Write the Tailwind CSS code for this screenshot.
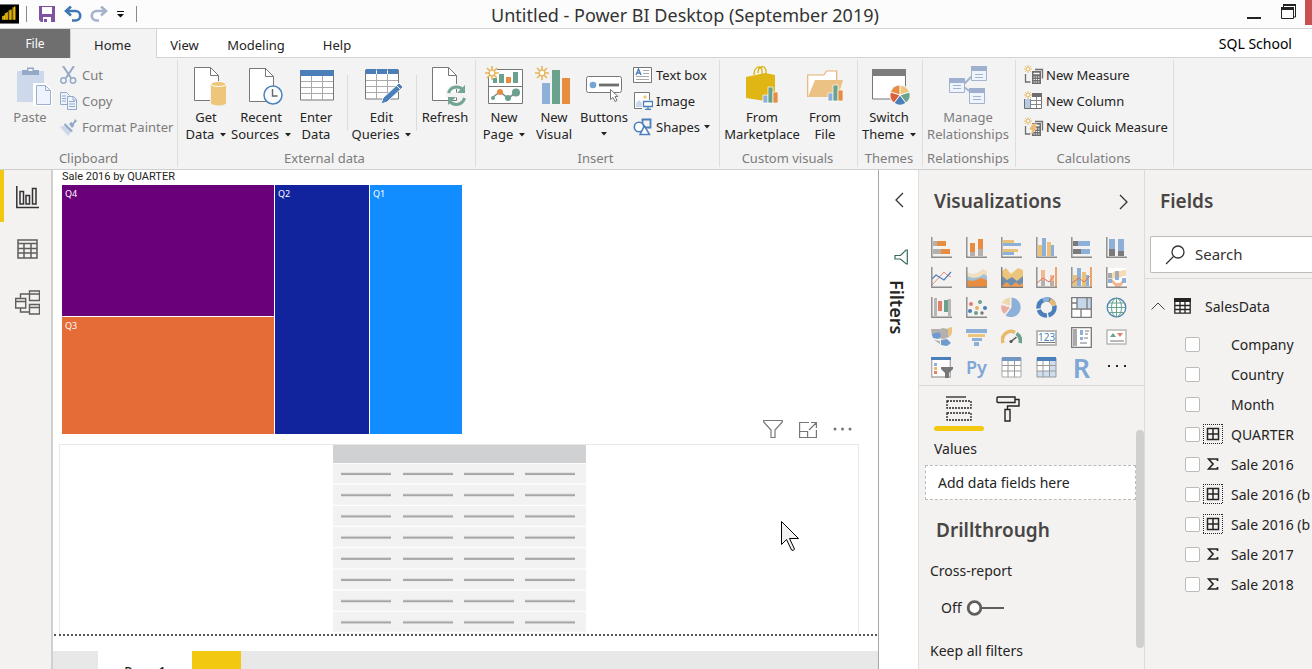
<!DOCTYPE html>
<html lang="en">
<head>
<meta charset="utf-8">
<title>Untitled - Power BI Desktop</title>
<script src="https://cdn.jsdelivr.net/npm/@tailwindcss/browser@4"></script>
</head>
<body class="flex h-screen flex-col overflow-hidden bg-white font-['Noto_Sans','Open_Sans',sans-serif] text-[#252423]">

<svg class="hidden" aria-hidden="true">
  <defs>
    <symbol id="caret" viewBox="0 0 6 4"><path d="M0 0h6L3 3.5z" fill="#222"/></symbol>
    <symbol id="page" viewBox="0 0 25 34"><path d="M.5.5h16l8 8v25H.5z" fill="#fff" stroke="#777"/><path d="M16.500.5v8h8" fill="none" stroke="#777"/></symbol>
    <symbol id="burst" viewBox="0 0 14 14"><path d="M7 0v4M7 10v4M0 7h4M10 7h4M2 2l3 3M9 9l3 3M12 2L9 5M5 9l-3 3" stroke="#e8b55c" stroke-width="1.600"/><circle cx="7" cy="7" r="2.800" fill="#fff" stroke="#e8b55c" stroke-width="1.300"/></symbol>
    <symbol id="axes" viewBox="0 0 21 21"><path d="M.8 0v20.200H21" fill="none" stroke="#8a8a8a" stroke-width="1.400"/></symbol>
    <symbol id="calcgroup" viewBox="0 0 20 20"><path d="M11 4.500h7.500v9M1.500 9v8h5" fill="none" stroke="#6e6e6e" stroke-width="1.300"/><rect x="8" y="6" width="9" height="13" fill="#6e6e6e"/><path d="M9.500 8.500h6" stroke="#fff" stroke-width="1.500"/><path d="M9.500 12h6M9.500 14.500h6M9.500 17h6" stroke="#fff" stroke-width="1.200" stroke-dasharray="1.300 1"/></symbol>
    <symbol id="calcfield" viewBox="0 0 20 20"><path d="M0 .5h20M0 19.500h20M.5 0v20M19.500 0v20" fill="none" stroke="#252423" stroke-dasharray="1 1"/><path d="M4.500 4.500h11v11h-11zM10 4.500v11M4.500 10h11" fill="none" stroke="#252423" stroke-width="1.500"/></symbol>
    <symbol id="sigma" viewBox="0 0 12 12"><path d="M10.500 3V1H1.500L6 6l-4.500 5h9V9" fill="none" stroke="#252423" stroke-width="1.700"/></symbol>
  </defs>
</svg>

<!-- Title bar -->
<header class="flex h-[29px] shrink-0 items-center border-b border-[#d4d4d4] bg-[#fcfcfc]">
  <div class="flex w-[137px] shrink-0 items-center">
    <svg class="h-5 w-5" viewBox="0 0 20 20"><path fill="#000" d="M0 0h20v20H0z"/><path d="M2 12h3v4H2zM5 9h3v7H5zM9 6h3v10H9zM13 3h3v13h-3z" fill="#c79a0c"/><path d="M4 11h1v5H4zM7 8h1v8H7zM11 5h1v11h-1zM15 2h1v14h-1z" fill="#f2c811"/></svg>
    <span class="ml-[7px] h-4 w-px bg-[#8a8a8a]"></span>
    <button class="ml-3" aria-label="Save"><svg class="h-4 w-4" viewBox="0 0 16 16"><path d="M0 0h16v16H2l-2-2z" fill="#8052a3"/><path d="M3 1h10v7H3z" fill="#fff"/><path d="M4 11h8v5H4z" fill="#fff"/><path d="M5 13h3v3H5z" fill="#8052a3"/></svg></button>
    <button class="ml-[9px]" aria-label="Undo"><svg class="h-4 w-[18px]" viewBox="0 0 18 16"><path d="M2 5h9.500a4.600 4.600 0 0 1 0 9.500H8" fill="none" stroke="#3f77b5" stroke-width="2.600"/><path d="M7 .5L2 5l5 4.500" fill="none" stroke="#3f77b5" stroke-width="2.600"/></svg></button>
    <button class="ml-2" aria-label="Redo"><svg class="h-4 w-[18px]" viewBox="0 0 18 16"><path d="M16 5H6.500a4.600 4.600 0 0 0 0 9.500H9" fill="none" stroke="#a4b3cb" stroke-width="2.600"/><path d="M11 .5L16 5l-5 4.500" fill="none" stroke="#a4b3cb" stroke-width="2.600"/></svg></button>
    <button class="ml-[9px]" aria-label="Customize toolbar"><svg class="h-[7px] w-[7px]" viewBox="0 0 7 7"><path d="M0 0h7v1H0zM0 3h7L3.500 6.500z" fill="#111"/></svg></button>
    <span class="ml-3 h-4 w-px bg-[#8a8a8a]"></span>
  </div>
  <h1 class="flex-1 pt-0.5 text-center text-[18px] leading-6 text-[#333]">Untitled - Power BI Desktop (September 2019)</h1>
  <div class="flex w-[79px] shrink-0 self-start pl-3.5">
    <button aria-label="Minimize"><svg class="h-6 w-3.5" viewBox="0 0 14 24"><path d="M0 16h14v2H0z" fill="#222"/></svg></button>
    <button class="ml-5" aria-label="Restore"><svg class="h-6 w-[15px]" viewBox="0 0 15 24"><path d="M2.500 6V4h12v12h-2" fill="none" stroke="#222"/><path d="M2 3h13v2H2zM0 6h13v3H0z" fill="#222"/><path d="M.5 6.500h12v11H.5z" fill="none" stroke="#222"/></svg></button>
    <button class="ml-[9px] h-[25px] w-[7px] bg-[#c75050]" aria-label="Close"></button>
  </div>
</header>

<!-- Ribbon tabs -->
<nav class="flex h-[29px] shrink-0 bg-white text-[13px]">
  <button class="w-[70px] bg-[#6f6f6f] text-xs text-white">File</button>
  <button class="w-[87px] border-x border-[#d4d4d4] bg-[#f3f3f3] pt-1 pr-0.5">Home</button>
  <div class="flex flex-1 items-center border-b border-[#d4d4d4] pt-1.5">
    <button class="w-[55px]">View</button>
    <button class="w-[88px]">Modeling</button>
    <button class="w-[74px]">Help</button>
    <button class="mr-5 ml-auto pb-1.5 text-[14px] text-black">SQL School</button>
  </div>
</nav>

<!-- Ribbon -->
<div class="flex h-28 shrink-0 border-b border-[#cfcfcf] bg-[#f3f3f3] pt-0.5 pb-0.5 text-[13px] leading-[17px]">
  <section class="flex w-[178px] shrink-0 flex-col border-r border-[#dedede] text-[#7c7c7c]">
    <div class="flex flex-1">
      <button class="flex w-[60px] flex-col items-center pt-1.5">
        <svg class="mb-[3px] ml-2 h-10 w-9" viewBox="0 0 36 40"><path d="M1 5h27v31H1z" fill="#cdd8ea"/><path d="M6 4h5V1.500h7V4h5v5H6z" fill="#94a8c8"/><path d="M12.500 3h4v2h-4z" fill="#f3f3f3"/><path d="M18.500 18.500h10l6 6v14h-16z" fill="#eef4fd" stroke="#fff" stroke-width="3"/><path d="M20.500 19.500h9l5 5v14h-14z" fill="#eef4fd" stroke="#9fb0ce"/><path d="M29.500 19.500v5h5" fill="none" stroke="#9fb0ce"/></svg>
        Paste</button>
      <div class="flex flex-col pt-0.5">
        <button class="flex h-[26px] items-center gap-[5px]"><svg class="h-[18px] w-[17px]" viewBox="0 0 17 18"><path d="M3 0l8 12M14 0L6 12" stroke="#94a8c8" stroke-width="2"/><circle cx="3.500" cy="14.500" r="2.700" fill="none" stroke="#94a8c8" stroke-width="1.500"/><circle cx="13" cy="14.500" r="2.700" fill="none" stroke="#94a8c8" stroke-width="1.500"/></svg>Cut</button>
        <button class="flex h-[26px] items-center gap-[5px]"><svg class="h-[18px] w-[17px]" viewBox="0 0 17 18"><path d="M.5.5h6l3 3v9h-9z" fill="#eef4fd" stroke="#94a8c8"/><path d="M2 4h4M2 6.500h4M2 9h4" stroke="#94a8c8"/><path d="M7.500 4.500h6l3 3v10h-9z" fill="#eef4fd" stroke="#94a8c8"/><path d="M9 9.500h6M9 12h6M9 14.500h6M13 5v3h3" fill="none" stroke="#94a8c8"/></svg>Copy</button>
        <button class="flex h-[26px] items-center gap-[5px]"><svg class="h-[17px] w-[17px]" viewBox="0 0 17 17"><path d="M0 8l6-2 6 6-4 5z" fill="#cdd8ea"/><path d="M5 4l8 8-2 1-7-7zM9 5l2-2 2 1 2-4 2 2-3 3v2l-2 2z" fill="#94a8c8"/></svg>Format Painter</button>
      </div>
    </div>
    <h2 class="text-center">Clipboard</h2>
  </section>

  <section class="flex w-[298px] shrink-0 flex-col border-r border-[#dedede]">
    <div class="flex flex-1 pl-px">
      <button class="flex w-[54px] flex-col items-center pt-1.5"><svg class="mb-[3px] ml-2.5 h-10 w-[34px]" viewBox="0 0 34 40"><use href="#page" width="25" height="34" y="1"/><path d="M16.500 17v21h16V17" fill="#edc67b" stroke="#f3f3f3"/><ellipse cx="24.500" cy="37" rx="7.500" ry="2.500" fill="#edc67b"/><ellipse cx="24.500" cy="18" rx="7.500" ry="2.500" fill="#edc67b" stroke="#fff"/></svg><span>Get</span><span class="flex items-center gap-1.5">Data<svg class="h-1 w-1.5"><use href="#caret"/></svg></span></button>
      <button class="flex w-14 flex-col items-center pt-1.5"><svg class="mb-[3px] ml-2.5 h-10 w-[34px]" viewBox="0 0 34 40"><use href="#page" width="25" height="34" y="2"/><circle cx="24" cy="29" r="9" fill="#f9fbff" stroke="#4c83bd" stroke-width="1.500"/><path d="M23.500 23v7h5" fill="none" stroke="#666" stroke-width="1.400"/></svg><span>Recent</span><span class="flex items-center gap-1.5">Sources<svg class="h-1 w-1.5"><use href="#caret"/></svg></span></button>
      <button class="flex w-[54px] flex-col items-center pt-1.5"><svg class="mb-[3px] ml-0.5 h-10 w-[34px]" viewBox="0 0 34 40"><path d="M.5 6h33v28H.5z" fill="#fff" stroke="#777"/><path d="M0 4h34v6H0z" fill="#4a7fba"/><path d="M1 15.500h32M1 21.500h32M1 27.500h32M11.500 10v24M22.500 10v24" stroke="#aaa"/></svg><span>Enter</span><span>Data</span></button>
      <span class="mr-[3px] ml-1 mt-[15px] h-14 w-px bg-[#dcdcdc]"></span>
      <button class="flex w-[61px] flex-col items-center pt-1.5"><svg class="mb-[3px] ml-1 h-10 w-[38px]" viewBox="0 0 38 40"><path d="M.5 4h33v29H.5z" fill="#fff" stroke="#777"/><path d="M1 3h10v5H1zM12 3h10v5H12zM23 3h10v5H23z" fill="#4a7fba"/><path d="M1 14.500h32M1 20.500h32M1 26.500h32M11.500 8v25M22.500 8v25" stroke="#aaa"/><path d="M16 38l2-6 16-15 4 4-16 15z" fill="#4a7fba" stroke="#f3f3f3"/><path d="M31 19l4 4" stroke="#fff"/></svg><span>Edit</span><span class="flex items-center gap-1.5">Queries<svg class="h-1 w-1.5"><use href="#caret"/></svg></span></button>
      <span class="mr-0.5 ml-1 mt-[15px] h-14 w-px bg-[#dcdcdc]"></span>
      <button class="flex w-[52px] flex-col items-center pt-1.5"><svg class="mb-[3px] ml-2 h-10 w-[34px]" viewBox="0 0 34 40"><use href="#page" width="25" height="34" y="1"/><path d="M14 29h20M16 27a8.500 8.500 0 0 1 15-3M32 32a8.500 8.500 0 0 1-15 3" fill="none" stroke="#f3f3f3" stroke-width="5"/><path d="M16.500 27a8.500 8.500 0 0 1 14.500-3M32.500 32a8.500 8.500 0 0 1-15 3" fill="none" stroke="#73a592" stroke-width="3"/><path d="M33 19v8h-8zM16 39v-8h8z" fill="#73a592"/></svg><span>Refresh</span></button>
    </div>
    <h2 class="pr-1 text-center text-[#7c7c7c]">External data</h2>
  </section>

  <section class="flex w-[244px] shrink-0 flex-col border-r border-[#dedede]">
    <div class="flex flex-1 pl-[3px]">
      <button class="flex w-[50px] flex-col items-center pt-1.5"><svg class="mb-[3px] h-10 w-[38px]" viewBox="0 0 38 40"><path d="M3.500 3.500h34v34h-34z" fill="#fff" stroke="#777"/><path d="M4 20.500h34" stroke="#777"/><path d="M8 12h4v5H8zM14 8h5v9h-5zM28 6h5v11h-5z" fill="#6aa28d"/><path d="M21 11h5v6h-5z" fill="#e88c42"/><path d="M8 31l7-5 8 6 8-5" fill="none" stroke="#888" stroke-width="1.500"/><circle cx="8" cy="32" r="2" fill="#6aa28d"/><circle cx="15" cy="26" r="3" fill="#e88c42"/><circle cx="23" cy="32" r="3" fill="#6aa28d"/><circle cx="31" cy="26.500" r="4" fill="#6aa28d"/><path d="M0 0h12v11H0z" fill="#f3f3f3"/><use href="#burst" width="14" height="14"/></svg><span>New</span><span class="flex items-center gap-1.5">Page<svg class="h-1 w-1.5"><use href="#caret"/></svg></span></button>
      <button class="flex w-[50px] flex-col items-center pt-1.5"><svg class="mr-0.5 mb-[3px] h-10 w-9" viewBox="0 0 36 40"><path d="M7 17h8v21H7z" fill="#8db0d8"/><path d="M17 4h8v34h-8z" fill="#6aa28d"/><path d="M27 12h8v26h-8z" fill="#e88c42"/><use href="#burst" width="14" height="14"/></svg><span>New</span><span>Visual</span></button>
      <button class="flex w-[50px] flex-col items-center pt-1.5"><svg class="mb-[3px] h-10 w-9" viewBox="0 0 36 40"><rect x=".5" y="10.500" width="35" height="16" rx="2" fill="#fff" stroke="#777"/><circle cx="7" cy="19" r="3.300" fill="#74a5d6"/><path d="M13 19h20" stroke="#6e6e6e" stroke-width="2.800"/><path d="M24.500 23.500v10l2.500-2 2 4 2-1-2-4h3z" fill="#fff" stroke="#777"/></svg><span>Buttons</span><svg class="mt-1.5 h-1 w-1.5"><use href="#caret"/></svg></button>
      <div class="ml-1 flex flex-col pt-0.5">
        <button class="flex h-[26px] items-center gap-[3px]"><svg class="h-[18px] w-5" viewBox="0 0 20 18"><path d="M.5 1.500h18v15H.5z" fill="#fff" stroke="#777"/><path d="M3 9l2.500-6L8 9M4 7h3" fill="none" stroke="#4a7fba" stroke-width="1.400"/><path d="M10 4.500h6M10 7.500h6M3 10.500h13M3 13.500h13" stroke="#aaa"/></svg>Text box</button>
        <button class="flex h-[26px] items-center gap-[3px]"><svg class="h-[18px] w-5" viewBox="0 0 20 18"><path d="M9 16.500H1.500V.5h15V8" fill="#fff" stroke="#777"/><path d="M3 15v-4l3-3 3 3v4z" fill="#cdd8ea"/><circle cx="12" cy="5" r="1.700" fill="#edc67b"/><path d="M10.500 9.500h9v5h-9zM15 15v3M12 17.500h6" fill="#fff" stroke="#4a7fba" stroke-width="1.300"/></svg>Image</button>
        <button class="flex h-[26px] items-center gap-[3px]"><svg class="h-[18px] w-5" viewBox="0 0 20 18"><path d="M9.500 1.500h8v8h-8z" fill="#f3f3f3" stroke="#4a7fba" stroke-width="1.800"/><circle cx="6" cy="9" r="4.700" fill="#fff" stroke="#4a7fba" stroke-width="1.600"/><path d="M7 16.500L11.500 8l5 8.500z" fill="#fff" stroke="#4a7fba" stroke-width="1.500"/></svg><span class="flex items-center gap-1">Shapes<svg class="h-1 w-1.5"><use href="#caret"/></svg></span></button>
      </div>
    </div>
    <h2 class="pr-1 text-center text-[#7c7c7c]">Insert</h2>
  </section>

  <section class="flex w-[138px] shrink-0 flex-col border-r border-[#dedede]">
    <div class="flex flex-1 pl-1">
      <button class="flex w-[76px] flex-col items-center pt-1.5"><svg class="mb-[3px] h-10 w-8" viewBox="0 0 32 40"><path d="M8 9c0-9 7-10 8-5v5M12 7c0-8 8-8 8-2v3" fill="none" stroke="#d9b310" stroke-width="1.300"/><path d="M0 11l19-4 10 2v25l-10 1-19-3z" fill="#dfb613"/><path d="M17 29h5v8h-5z" fill="#8db0d8" stroke="#fff" stroke-width=".7"/><path d="M22 21h5v16h-5z" fill="#6aa28d" stroke="#fff" stroke-width=".7"/><path d="M27 26h5v11h-5z" fill="#e88c42" stroke="#fff" stroke-width=".7"/></svg><span>From</span><span>Marketplace</span></button>
      <button class="flex w-[50px] flex-col items-center pt-1.5"><svg class="mb-[3px] h-10 w-9" viewBox="0 0 36 40"><path d="M.7 31V9h16l3-4h10v9" fill="#fff" stroke="#e6b273" stroke-width="1.200"/><path d="M1 31l7-17h28l-5 17z" fill="#ebc283"/><path d="M21 27h5v8h-5z" fill="#8db0d8" stroke="#fff" stroke-width=".7"/><path d="M26 19h5v16h-5z" fill="#6aa28d" stroke="#fff" stroke-width=".7"/><path d="M31 24h5v11h-5z" fill="#e88c42" stroke="#fff" stroke-width=".7"/></svg><span>From</span><span>File</span></button>
    </div>
    <h2 class="pr-0.5 text-center text-[#7c7c7c]">Custom visuals</h2>
  </section>

  <section class="flex w-[65px] shrink-0 flex-col border-r border-[#dedede]">
    <button class="flex flex-1 flex-col items-center pt-1.5 pr-0.5"><svg class="mb-[3px] ml-1 h-10 w-[38px]" viewBox="0 0 38 40"><path d="M.5 4h33v29H.5z" fill="#fff" stroke="#777"/><path d="M0 3h34v7H0z" fill="#7c7c7c"/><circle cx="28" cy="29" r="10.500" fill="#f3f3f3"/><path d="M28 29V20A9.500 9.500 0 0 1 37 26z" fill="#edc67b"/><path d="M28 29l9-3a9.500 9.500 0 0 1-3.500 10.700z" fill="#6aa28d"/><path d="M28 29l5.500 7.700a9.500 9.500 0 0 1-11 0z" fill="#4a7fba"/><path d="M28 29l-5.500 7.700A9.500 9.500 0 0 1 19 26z" fill="#d9603b"/><path d="M28 29l-9-3a9.500 9.500 0 0 1 9-6.500z" fill="#e88c42"/><path d="M28 29V19M28 29l9.500-3M28 29l6 8M28 29l-6 8M28 29l-9.500-3" stroke="#fff"/></svg><span>Switch</span><span class="flex items-center gap-1.5">Theme<svg class="h-1 w-1.5"><use href="#caret"/></svg></span></button>
    <h2 class="pr-0.5 text-center text-[#7c7c7c]">Themes</h2>
  </section>

  <section class="flex w-[93px] shrink-0 flex-col border-r border-[#dedede] pr-0.5 text-[#7c7c7c]">
    <button class="flex flex-1 flex-col items-center pt-1.5"><svg class="mb-[3px] h-10 w-[38px]" viewBox="0 0 38 40"><path d="M15 18l8-8M15 21l8 6" stroke="#a4b3cb" stroke-width="2"/><g fill="#eef4fd" stroke="#a4b3cb"><path d="M22.500.5h15v14h-15zM.5 12.500h15v14H.5zM20.500 22.500h15v15h-15z"/><path d="M26 8.500h8M26 11.500h8M4 19.500h8M4 22.500h8M24 30.500h8M24 33.500h8"/></g><path d="M22 0h16v5H22zM0 12h16v5H0zM20 22h16v5H20z" fill="#9fb0ce"/></svg><span>Manage</span><span>Relationships</span></button>
    <h2 class="text-center">Relationships</h2>
  </section>

  <section class="flex w-[158px] shrink-0 flex-col border-r border-[#dedede]">
    <div class="flex flex-1 flex-col pt-0.5 pl-2">
      <button class="flex h-[26px] items-center gap-0.5"><svg class="h-5 w-5" viewBox="0 0 20 20"><use href="#calcgroup" width="20" height="20"/><use href="#burst" width="8" height="8"/></svg>New Measure</button>
      <button class="flex h-[26px] items-center gap-0.5"><svg class="h-5 w-5" viewBox="0 0 20 20"><path d="M.5 2.500h17v15H.5z" fill="#fff" stroke="#6e6e6e"/><path d="M8 2h10v4H8z" fill="#6e6e6e"/><path d="M1 8h5v9H1z" fill="#b5cbe5"/><path d="M7 9.500h11M7 13.500h11M6.500 6v11M12.500 6v11" stroke="#888"/><path d="M0 0h8v8H0z" fill="#f3f3f3"/><use href="#burst" width="8" height="8"/></svg>New Column</button>
      <button class="flex h-[26px] items-center gap-0.5"><svg class="h-5 w-5" viewBox="0 0 20 20"><use href="#calcgroup" width="20" height="20"/><path d="M8 7h5l-2 4h2l-7 8 2-6H5z" fill="#edb868" stroke="#f3f3f3" stroke-width=".5"/><use href="#burst" width="8" height="8"/></svg>New Quick Measure</button>
    </div>
    <h2 class="pr-0.5 text-center text-[#7c7c7c]">Calculations</h2>
  </section>
</div>

<div class="flex min-h-0 flex-1">
  <!-- View switcher -->
  <nav class="flex w-[53px] shrink-0 flex-col border-r-2 border-[#d2d0ce] bg-[#f3f2f1]">
    <button class="flex h-[52px] items-center border-l-4 border-[#f2c811] pt-0.5 pl-3" aria-label="Report"><svg class="h-[23px] w-[23px]" viewBox="0 0 23 23" fill="none" stroke="#333"><path d="M.8 0v21.500H23" stroke-width="1.500"/><path d="M4 5.500h3.500V18H4zM10 9.500h3.500V18H10zM16.500 2.500H20V18h-3.500z" stroke-width="1.500"/></svg></button>
    <button class="flex h-[54px] items-center pl-[17px]" aria-label="Data"><svg class="h-5 w-[21px]" viewBox="0 0 21 20" fill="none" stroke="#605e5c" stroke-width="1.500"><path d="M1 1h19v18H1zM1 4.500h19M1 9.500h19M1 14h19M7 4.500V19M14 4.500V19"/></svg></button>
    <button class="flex h-[52px] items-center pl-[15px]" aria-label="Model"><svg class="h-[25px] w-[25px]" viewBox="0 0 25 25" fill="none" stroke="#605e5c" stroke-width="1.400"><path d="M14.500 1h10v9.500h-10zM14.500 4h10M.7 8.500h10V18H.7zM.7 11.500h10M14.500 14.500h10V24h-10zM14.500 17.500h10M5.500 8.500V4h9M5.500 18v4h9"/></svg></button>
  </nav>

  <!-- Report canvas -->
  <main class="relative flex min-w-0 flex-1 flex-col border-r border-[#a6a6a6] bg-white">
    <h2 class="h-[15px] pl-[9px] font-['Roboto',sans-serif] text-[11px] leading-[14px]">Sale 2016 by QUARTER</h2>
    <div class="flex h-[259px] shrink-0 justify-between pr-[26px] pl-[9px]">
      <div class="flex h-[249px] w-[400px] gap-px text-[9px] leading-[14px] text-white">
        <div class="flex w-[212px] flex-col gap-px">
          <div class="flex-[132] bg-[#6b007b] pt-0.5 pl-[3px]">Q4</div>
          <div class="flex-[117] bg-[#e66c37] pt-0.5 pl-[3px]">Q3</div>
        </div>
        <div class="w-[94px] bg-[#12239e] pt-0.5 pl-[3px]">Q2</div>
        <div class="flex-1 bg-[#118dff] pt-0.5 pl-[3px]">Q1</div>
      </div>
      <div class="flex items-center gap-4 self-end pb-[5px]">
        <button aria-label="Filters on this visual"><svg class="h-5 w-5" viewBox="0 0 20 20"><path d="M.7 1.500h18.600v1.500L12 11v7.500H8V11L.7 3z" fill="none" stroke="#777" stroke-width="1.200"/></svg></button>
        <button aria-label="Focus mode"><svg class="h-5 w-[18px]" viewBox="0 0 18 20" fill="none" stroke="#777" stroke-width="1.200"><path d="M10 3.500H.6v15h16.800V11M.6 12.500h8v6M10 11l7-7M12 3.500h5.400V9"/></svg></button>
        <button aria-label="More options"><svg class="h-5 w-[19px]" viewBox="0 0 19 20" fill="#777"><circle cx="2" cy="10" r="1.500"/><circle cx="9.500" cy="10" r="1.500"/><circle cx="17" cy="10" r="1.500"/></svg></button>
      </div>
    </div>
    <div class="mr-[19px] ml-1.5 h-[190px] shrink-0 border border-b-0 border-[#e8e8e8]">
      <svg class="mx-auto block h-[189px] w-[253px]" viewBox="0 0 253 189" role="img" aria-label="Empty table visual">
        <defs><pattern id="placeholder-row" width="253" height="21.200" patternUnits="userSpaceOnUse" y="18.500"><path fill="#f2f2f2" d="M0 0h253v20H0z"/><path d="M8 10.500h50M70 10.500h50M131 10.500h50M192 10.500h50" stroke="#a6a6a6" stroke-width="2"/></pattern></defs>
        <path d="M0 0h253v18H0z" fill="#d0d1d2"/><path d="M0 18.500h253V189H0z" fill="url(#placeholder-row)"/>
      </svg>
    </div>
    <div class="mx-px h-[17px] shrink-0 border-t-2 border-dotted border-[#555]"></div>
    <div class="flex min-h-0 flex-1 overflow-hidden bg-[#e8e8e8]">
      <div class="flex w-[45px] justify-around px-1.5 pt-2.5 text-[13px] leading-5 text-[#a19f9d]"><button aria-label="Previous page">‹</button><button aria-label="Next page">›</button></div>
      <button class="flex w-[94px] justify-center bg-white pt-2.5 text-[13px] leading-5 font-medium">Page 1</button>
      <button class="w-[49px] bg-[#f2c811]" aria-label="New page"></button>
    </div>
    <svg class="absolute top-[351px] left-[728px] h-[31px] w-[19px]" viewBox="0 0 19 31"><path d="M.5.5v23l5-5 5 10.500q2 1.500 3-1L8.500 17.500h9z" fill="#f1f1f1" stroke="#000"/></svg>
  </main>

  <!-- Collapsed filters pane -->
  <aside class="flex w-10 shrink-0 flex-col items-center border-r border-[#e1dfdd] bg-white pt-[22px]">
    <button aria-label="Expand filters"><svg class="block h-4 w-2.5" viewBox="0 0 10 16"><path d="M9 1L2 8l7 7" fill="none" stroke="#333" stroke-width="1.300"/></svg></button>
    <svg class="mt-[41px] ml-1 h-4 w-3.5" viewBox="0 0 14 16"><path d="M13.300 1v14h-1L6.500 10H1V6.500h5.500L12 1z" fill="none" stroke="#3a6b5c" stroke-width="1.200"/></svg>
    <h2 class="mt-[15px] mr-1 text-[18px] leading-6 font-semibold [writing-mode:vertical-rl]">Filters</h2>
  </aside>

  <!-- Visualizations pane -->
  <aside class="flex w-[226px] shrink-0 flex-col border-r border-[#dddbd9] bg-[#f3f2f1]">
    <div class="flex h-[67px] items-center justify-between pr-[15px] pb-1 pl-[15px]">
      <h2 class="text-[19px] font-semibold text-[#484644]">Visualizations</h2>
      <button aria-label="Collapse"><svg class="block h-4 w-2.5" viewBox="0 0 10 16"><path d="M1 1l7 7-7 7" fill="none" stroke="#333" stroke-width="1.300"/></svg></button>
    </div>
    <div class="grid grid-cols-6 gap-x-3.5 gap-y-[9px] border-b border-[#dddbd9] pr-[17px] pb-[7px] pl-3">
      <button aria-label="Stacked bar chart"><svg class="block h-[21px] w-[21px]" viewBox="0 0 21 21"><path d="M2 4h4v5H2zM2 12h8v5H2z" fill="#b3b0ad"/><path d="M6 4h9v5H6zM10 12h9v5h-9z" fill="#e88c42"/><use href="#axes"/></svg></button>
      <button aria-label="Stacked column chart"><svg class="block h-[21px] w-[21px]" viewBox="0 0 21 21"><path d="M4 6h5v10H4zM12 2h5v10h-5z" fill="#e88c42"/><path d="M4 15h5v4H4zM12 12h5v7h-5z" fill="#b3b0ad"/><use href="#axes"/></svg></button>
      <button aria-label="Clustered bar chart"><svg class="block h-[21px] w-[21px]" viewBox="0 0 21 21"><path d="M2 3h11v3H2zM2 12h15v3H2z" fill="#e9c178"/><path d="M2 6h18v3H2zM2 15h11v3H2z" fill="#8db0d8"/><use href="#axes"/></svg></button>
      <button aria-label="Clustered column chart"><svg class="block h-[21px] w-[21px]" viewBox="0 0 21 21"><path d="M2 8h4v11H2zM11 5h4v14h-4z" fill="#e9c178"/><path d="M6 1h4v18H6zM15 8h3v11h-3z" fill="#8db0d8"/><use href="#axes"/></svg></button>
      <button aria-label="100% stacked bar chart"><svg class="block h-[21px] w-[21px]" viewBox="0 0 21 21"><path d="M2 4h5v5H2zM2 12h8v5H2z" fill="#7a7a7a"/><path d="M7 4h12v5H7zM10 12h9v5h-9z" fill="#8db0d8"/><use href="#axes"/></svg></button>
      <button aria-label="100% stacked column chart"><svg class="block h-[21px] w-[21px]" viewBox="0 0 21 21"><path d="M3 2h6v11H3zM12 2h6v13h-6z" fill="#8db0d8"/><path d="M3 12h6v7H3zM12 14h6v5h-6z" fill="#7a7a7a"/><use href="#axes"/></svg></button>

      <button aria-label="Line chart"><svg class="block h-[21px] w-[21px]" viewBox="0 0 21 21" fill="none"><path d="M1 18L13 5l3 3 4 2" stroke="#e88c78"/><path d="M1 12l4-4 8 5 7-8" stroke="#4a7fba" stroke-width="1.200"/><use href="#axes"/></svg></button>
      <button aria-label="Area chart"><svg class="block h-[21px] w-[21px]" viewBox="0 0 21 21"><path d="M1 5l5 2 5-1 6-4 4 2v8H1z" fill="#f1dfc2"/><path d="M1 9l6 2 6-1 5-3 3 2v5H1z" fill="#a3c0d5"/><path d="M1 13l6 1 8-3 6 2v7H1z" fill="#e88c42"/><use href="#axes"/></svg></button>
      <button aria-label="Stacked area chart"><svg class="block h-[21px] w-[22px]" viewBox="0 0 22 21"><path d="M1 4l4-3 5 6 7-6 5 2v14H1z" fill="#edc47c"/><path d="M1 9l5 4 5-3 5 4 6-5v12H1z" fill="#6e8fb0"/><path d="M1 19l5-4 4 4 5-4 3 3 4-2v5H1z" fill="#f09b54"/><path d="M.7 0v20.300H22" fill="none" stroke="#777" stroke-width="1.300"/></svg></button>
      <button aria-label="Line and stacked column chart"><svg class="block h-[21px] w-[21px]" viewBox="0 0 21 21" fill="none"><path d="M5 3h4v13H5zM14 8h4v8h-4z" fill="#efb994"/><path d="M5 13h4v6H5zM14 14h4v5h-4z" fill="#b3b0ad"/><path d="M1 16l6-5 6 4 5-6" stroke="#df6c55"/><path d="M20 0v20" stroke="#e88c42" stroke-width="1.500"/><use href="#axes"/></svg></button>
      <button aria-label="Line and clustered column chart"><svg class="block h-[21px] w-[21px]" viewBox="0 0 21 21" fill="none"><path d="M2 8h4v11H2zM11 5h4v14h-4z" fill="#e9c178"/><path d="M6 1h4v18H6zM15 8h3v11h-3z" fill="#8db0d8"/><path d="M1 16l7-5 5 4 6-6" stroke="#df6c55"/><path d="M20 0v20" stroke="#e88c42" stroke-width="1.500"/><use href="#axes"/></svg></button>
      <button aria-label="Ribbon chart"><svg class="block h-[21px] w-[21px]" viewBox="0 0 21 21"><path d="M1 1h19v19H1z" fill="#fff"/><path d="M2 6h4l4-2h4l3-1h3v6h-3l-3 2h-4l-4 1H2z" fill="#f3dcb6"/><path d="M2 6h4v5H2zM9 4h4v7H9z" fill="#aaa"/><path d="M6 12l4 4h4l3-4v5l-3 3h-4l-4-4z" fill="#f1b891"/><path d="M2 12h4v4H2zM9 10h4v3H9zM16 11h4v5h-4z" fill="#8db0d8"/><use href="#axes"/></svg></button>

      <button aria-label="Waterfall chart"><svg class="block h-[21px] w-[21px]" viewBox="0 0 21 21"><path d="M3 1h3v18H3zM17 2h3v17h-3z" fill="#b9b7b5"/><path d="M7 4h4v10H7z" fill="#df8069"/><path d="M13 3h4v12h-4z" fill="#6aa28d"/><use href="#axes"/></svg></button>
      <button aria-label="Scatter chart"><svg class="block h-[21px] w-[21px]" viewBox="0 0 21 21"><g fill="#df8069"><circle cx="5" cy="7" r="2"/></g><g fill="#6aa28d"><circle cx="14" cy="5" r="2"/><circle cx="10" cy="16" r="2"/></g><g fill="#4a7fba"><circle cx="4" cy="14" r="2"/><circle cx="19" cy="11" r="2"/></g><circle cx="11" cy="11" r="2" fill="#e4b465"/><circle cx="16" cy="16" r="1.700" fill="#777"/><use href="#axes"/></svg></button>
      <button aria-label="Pie chart"><svg class="block h-[21px] w-[21px]" viewBox="0 0 21 21"><path d="M10.500 10.500V.5a9.800 9.800 0 1 1-6 18z" fill="#8db0d8"/><path d="M9 9V.5A9.500 9.500 0 0 0 1 6z" fill="#f0d8ae"/><path d="M9 10.500L3.500 17A9 9 0 0 1 .5 8z" fill="#e8afa0"/></svg></button>
      <button aria-label="Donut chart"><svg class="block h-[21px] w-[21px]" viewBox="0 0 21 21" fill="none" stroke-width="4.500"><circle cx="10.500" cy="10.500" r="8" stroke="#4a7fba" stroke-dasharray="10.500 1.500"/><path d="M7 3.300a8 8 0 0 1 6-.4" stroke="#8db0d8"/><path d="M14 3.300a8 8 0 0 1 4 5" stroke="#e9b96c"/></svg></button>
      <button aria-label="Treemap"><svg class="block h-[21px] w-[21px]" viewBox="0 0 21 21"><path d="M.7.700h19.600v19.600H.7z" fill="#fff"/><path d="M6 1h14v10H6z" fill="#c4d6ea"/><path d="M.7.700h19.600v19.600H.7zM.7 12h19.600M6 1v11M16 1v11M1 6h5M10 12v8" fill="none" stroke="#7a7a7a" stroke-width="1.300"/></svg></button>
      <button aria-label="Map"><svg class="block h-[21px] w-[21px]" viewBox="0 0 21 21" fill="none"><circle cx="10.500" cy="10.500" r="9.300" fill="#f9fcfb" stroke="#4a7fba" stroke-width="1.300"/><path d="M10.500 1v19M2 6h17M1 10.500h19M2 15.500h17" stroke="#6aa28d"/><ellipse cx="10.500" cy="10.500" rx="5" ry="9.300" stroke="#6aa28d"/></svg></button>

      <button aria-label="Filled map"><svg class="block h-[21px] w-[21px]" viewBox="0 0 21 21"><path d="M0 2h9l3-1 5 1 1 8-5 2-8-1-4-2z" fill="#b3b0ad"/><path d="M1 7l7-2 2 4-3 3-5-1zM10 13l6-1 4 4-4 3-6-1z" fill="#6f9bd0"/><path d="M17 1l4-1v6l-2 4-2-4z" fill="#edc47c"/><path d="M3 13l6 1v3z" fill="#b3b0ad"/></svg></button>
      <button aria-label="Funnel"><svg class="block h-[21px] w-[21px]" viewBox="0 0 21 21"><path d="M0 2h21v4H0zM6 11h10v3H6zM8 15h5v4H8z" fill="#8db0d8"/><path d="M2 7h17v3H2z" fill="#edc47c"/></svg></button>
      <button aria-label="Gauge"><svg class="block h-[21px] w-[21px]" viewBox="0 0 21 21" fill="none"><path d="M2 16a8.500 8.500 0 0 1 12-10.500" stroke="#e9b96c" stroke-width="3.500"/><path d="M15.500 6.500A8.500 8.500 0 0 1 19 16" stroke="#6aa28d" stroke-width="3.500"/><path d="M9.500 15l6-5" stroke="#555" stroke-width="1.600"/><circle cx="10" cy="14.500" r="1.600" fill="#555"/></svg></button>
      <button class="h-4 self-center border-2 border-[#bab8b6] bg-white text-[10px] leading-[10px] text-[#4a7fba]" aria-label="Card"><span class="block border-b border-[#777]">123</span></button>
      <button aria-label="Multi-row card"><svg class="block h-[21px] w-[21px]" viewBox="0 0 21 21"><path d="M.7.700h19.600v19.600H.7z" fill="#fff" stroke="#777" stroke-width="1.300"/><path d="M2 2h4v17H2z" fill="#aaa"/><path d="M9 3h3v5H9zM9 10h3v3H9z" fill="#8db0d8"/><path d="M14 4h4M14 7h3M13 11h4M9 16h7" stroke="#777"/></svg></button>
      <button aria-label="KPI"><svg class="block h-[21px] w-[21px]" viewBox="0 0 21 21"><path d="M1 3h19v14H1z" fill="#fff" stroke="#bab8b6" stroke-width="1.500"/><path d="M4 10l3-4 3 4z" fill="#6aa28d"/><path d="M11 6h6l-3 4z" fill="#df8069"/><path d="M4 14h14" stroke="#777"/></svg></button>

      <button aria-label="Slicer"><svg class="block h-[21px] w-[22px] overflow-visible" viewBox="0 0 22 21"><path d="M.7 1h18.600v19H.7z" fill="#fff" stroke="#aaa" stroke-width="1.300"/><path d="M0 0h20v3H0z" fill="#4a7fba"/><path d="M3 6h3v3H3z" fill="#8db0d8"/><path d="M3 10h3v3H3z" fill="#e9b96c"/><path d="M3 14h3v3H3z" fill="#df8069"/><path d="M10 10h12v2l-4 4v5h-4v-5l-4-4z" fill="#777"/></svg></button>
      <button class="text-[18px] leading-[21px] font-semibold text-[#7da7d6]" aria-label="Python visual">Py</button>
      <button aria-label="Table"><svg class="block h-[21px] w-[21px]" viewBox="0 0 21 21"><path d="M1 1h19v19H1z" fill="#fff" stroke="#aaa"/><path d="M1 8.500h19M1 14h19M7 4v16M13.500 4v16" stroke="#999"/><path d="M1 0h19v4H1z" fill="#7297c2"/></svg></button>
      <button aria-label="Matrix"><svg class="block h-[21px] w-[21px]" viewBox="0 0 21 21"><path d="M1 1h19v19H1z" fill="#fff"/><path d="M13 4h7v16H1v-6h12z" fill="#cfdeee"/><path d="M1 1h19v19H1zM1 8.500h19M1 14h19M7 4v16M13.500 4v16" fill="none" stroke="#999"/><path d="M1 0h19v4H1z" fill="#4a7fba"/></svg></button>
      <button class="text-[27px] leading-[21px] font-semibold text-[#7da7d6]" aria-label="R script visual">R</button>
      <button aria-label="More visuals"><svg class="block h-[21px] w-[21px]" viewBox="0 0 21 21" fill="#252423"><path d="M2 8h2v2H2zM10 8h2v2h-2zM18 8h2v2h-2z"/></svg></button>
    </div>
    <div class="flex min-h-0 flex-1">
      <div class="min-w-0 flex-1 text-[14px] leading-5">
        <div class="flex pl-[15px]">
          <button class="flex h-[45px] w-[50px] flex-col items-center justify-between pt-2.5" aria-label="Fields"><svg class="h-[26px] w-[26px]" viewBox="0 0 26 26" fill="none" stroke="#252423" stroke-width="1.300"><path d="M0 1h20"/><path d="M1 5h24v7H1zM1 17h24v7H1z" stroke-dasharray="2 1"/></svg><span class="h-[5px] w-full rounded-full bg-[#f2c811]"></span></button>
          <button class="ml-3 flex h-[45px] w-6 pt-2.5" aria-label="Format"><svg class="h-[26px] w-6" viewBox="0 0 24 26" fill="none" stroke="#252423" stroke-width="1.400"><path d="M2 1h17v5.500H2q-1 0-1-1V2q0-1 1-1zM19 3.500h4V10H11.500v3.500M9 13.500h5V25H9z"/></svg></button>
        </div>
        <h3 class="mt-2 pl-[15px]">Values</h3>
        <div class="mt-1.5 ml-1.5 flex h-[35px] items-center border border-dashed border-[#bcbab8] bg-white pl-3">Add data fields here</div>
        <h2 class="mt-[18px] pl-[17px] text-[19px] leading-6 font-semibold text-[#484644]">Drillthrough</h2>
        <h3 class="mt-[19px] pl-[11px]">Cross-report</h3>
        <label class="mt-[17px] flex items-center pl-[22px]">Off
          <input type="checkbox" role="switch" class="peer sr-only">
          <svg class="ml-1 h-4 w-[38px]" viewBox="0 0 38 16"><circle cx="8.500" cy="8" r="6.300" fill="#fff" stroke="#605e5c" stroke-width="2.800"/><path d="M15 8h23" stroke="#605e5c" stroke-width="2"/></svg></label>
        <h3 class="mt-[23px] pl-[11px]">Keep all filters</h3>
      </div>
      <div class="mt-11 h-[218px] w-2 shrink-0 rounded-full bg-[#d0d0ce]"></div>
    </div>
  </aside>

  <!-- Fields pane -->
  <aside class="w-[167px] shrink-0 overflow-hidden bg-[#f3f2f1] text-[14px]">
    <h2 class="h-[66px] pl-[15px] text-[19px] leading-[62px] font-semibold text-[#484644]">Fields</h2>
    <div class="border-b border-[#dddbd9] pb-[5px] pl-[5px]">
      <label class="flex h-[37px] items-center rounded-l-xs border border-r-0 border-[#bebbb8] bg-white pl-3.5">
        <svg class="h-5 w-5 shrink-0" viewBox="0 0 20 20"><circle cx="13" cy="7" r="6" fill="none" stroke="#333" stroke-width="1.300"/><path d="M8.500 11.500L1 19" stroke="#333" stroke-width="1.300"/></svg>
        <input type="text" placeholder="Search" aria-label="Search" class="ml-2.5 w-full bg-transparent text-[15px] placeholder:text-[#333] focus:outline-none">
      </label>
    </div>
    <div class="flex h-[50px] items-center pt-1 pl-1.5">
      <button aria-label="Collapse table"><svg class="block h-2 w-3.5" viewBox="0 0 14 8"><path d="M.5 7.500L7 1l6.500 6.500" fill="none" stroke="#444"/></svg></button>
      <svg class="ml-[9px] h-4 w-[17px]" viewBox="0 0 17 16"><path d="M.8.800h15.400v14.400H.8z" fill="#fff"/><path d="M.8.800h15.400v14.400H.8zM1 7.500h15M1 11.500h15M6 3v12M11 3v12" fill="none" stroke="#252423" stroke-width="1.300"/><path d="M0 0h17v4H0z" fill="#252423"/></svg>
      <span class="ml-3.5">SalesData</span>
    </div>
    <ul class="whitespace-nowrap">
      <li><label class="flex h-[30px] items-center pl-10"><input type="checkbox" class="h-[15px] w-[15px] shrink-0 appearance-none rounded-xs border border-[#bebbb8] bg-white"><span class="w-[31px] shrink-0"></span>Company</label></li>
      <li><label class="flex h-[30px] items-center pl-10"><input type="checkbox" class="h-[15px] w-[15px] shrink-0 appearance-none rounded-xs border border-[#bebbb8] bg-white"><span class="w-[31px] shrink-0"></span>Country</label></li>
      <li><label class="flex h-[30px] items-center pl-10"><input type="checkbox" class="h-[15px] w-[15px] shrink-0 appearance-none rounded-xs border border-[#bebbb8] bg-white"><span class="w-[31px] shrink-0"></span>Month</label></li>
      <li><label class="flex h-[30px] items-center pl-10"><input type="checkbox" class="h-[15px] w-[15px] shrink-0 appearance-none rounded-xs border border-[#bebbb8] bg-white"><span class="flex w-[31px] shrink-0 pl-[3px]"><svg class="h-5 w-5"><use href="#calcfield"/></svg></span>QUARTER</label></li>
      <li><label class="flex h-[30px] items-center pl-10"><input type="checkbox" class="h-[15px] w-[15px] shrink-0 appearance-none rounded-xs border border-[#bebbb8] bg-white"><span class="flex w-[31px] shrink-0 pl-[7px]"><svg class="h-3 w-3"><use href="#sigma"/></svg></span>Sale 2016</label></li>
      <li><label class="flex h-[30px] items-center pl-10"><input type="checkbox" class="h-[15px] w-[15px] shrink-0 appearance-none rounded-xs border border-[#bebbb8] bg-white"><span class="flex w-[31px] shrink-0 pl-[3px]"><svg class="h-5 w-5"><use href="#calcfield"/></svg></span>Sale 2016 (b</label></li>
      <li><label class="flex h-[30px] items-center pl-10"><input type="checkbox" class="h-[15px] w-[15px] shrink-0 appearance-none rounded-xs border border-[#bebbb8] bg-white"><span class="flex w-[31px] shrink-0 pl-[3px]"><svg class="h-5 w-5"><use href="#calcfield"/></svg></span>Sale 2016 (b</label></li>
      <li><label class="flex h-[30px] items-center pl-10"><input type="checkbox" class="h-[15px] w-[15px] shrink-0 appearance-none rounded-xs border border-[#bebbb8] bg-white"><span class="flex w-[31px] shrink-0 pl-[7px]"><svg class="h-3 w-3"><use href="#sigma"/></svg></span>Sale 2017</label></li>
      <li><label class="flex h-[30px] items-center pl-10"><input type="checkbox" class="h-[15px] w-[15px] shrink-0 appearance-none rounded-xs border border-[#bebbb8] bg-white"><span class="flex w-[31px] shrink-0 pl-[7px]"><svg class="h-3 w-3"><use href="#sigma"/></svg></span>Sale 2018</label></li>
    </ul>
  </aside>
</div>
</body>
</html>
